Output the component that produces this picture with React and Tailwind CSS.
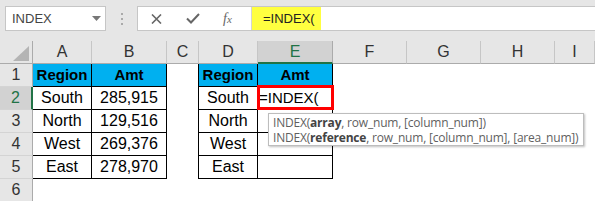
import React from 'react';

const cols = ['A', 'B', 'C', 'D', 'E', 'F', 'G', 'H', 'I'];

const data = [
  ['South', '285,915'],
  ['North', '129,516'],
  ['West', '269,376'],
  ['East', '278,970'],
];

function RowHead({ n, active }) {
  return (
    <div
      className={
        'flex items-center justify-center text-[16px] border-b border-b-[#d4d4d4] ' +
        (active
          ? 'bg-[#d2d2d2] text-[#217346] border-r-2 border-r-[#217346]'
          : 'bg-[#e6e6e6] text-[#333] border-r border-r-[#ababab]')
      }
    >
      {n}
    </div>
  );
}

export default function App() {
  return (
    <div className="relative w-[595px] h-[201px] overflow-hidden bg-white font-['Liberation_Sans',Arial,sans-serif] text-black">
      {/* formula bar */}
      <div className="h-[41px] bg-[#e6e6e6] flex items-start pt-[6px]">
        <div className="ml-[5px] w-[101px] h-[25px] bg-white border border-[#c6c6c6] flex items-center justify-between pl-[6px] pr-[4px]">
          <span className="text-[13px] text-[#444]">INDEX</span>
          <svg width="9" height="5" viewBox="0 0 9 5">
            <path d="M0 0 L9 0 L4.5 5 Z" fill="#777" />
          </svg>
        </div>
        <div className="w-[31px] h-[25px] flex flex-col items-center justify-center gap-[3px]">
          <span className="w-[2px] h-[2px] bg-[#aaa]" />
          <span className="w-[2px] h-[2px] bg-[#aaa]" />
          <span className="w-[2px] h-[2px] bg-[#aaa]" />
        </div>
        <div className="flex-1 h-[25px] bg-white border border-[#c6c6c6] border-r-0 flex">
          <div className="w-[113px] flex items-center">
            <svg className="ml-[13px]" width="11" height="10" viewBox="0 0 11 10">
              <path d="M1 0.5 L10 9.5 M10 0.5 L1 9.5" stroke="#666" strokeWidth="1.6" />
            </svg>
            <svg className="ml-[24px]" width="14" height="11" viewBox="0 0 14 11">
              <path d="M1 5.5 L5 9.5 L13 1" stroke="#666" strokeWidth="2" fill="none" />
            </svg>
            <span className="ml-[23px] text-[14px] text-[#666] italic font-['Liberation_Serif',serif]">
              f<span className="text-[11px]">x</span>
            </span>
          </div>
          <div className="w-px bg-[#d4d4d4]" />
          <div className="w-[69px] bg-[#ffff40] flex items-center pl-[11px] text-[13px] text-[#222]">
            =INDEX(
          </div>
        </div>
      </div>

      {/* sheet */}
      <div className="grid grid-cols-[33px_59px_75px_32px_59px_75px_74px_74px_74px_40px] grid-rows-[23px_23px_23px_23px_23px_23px_23px]">
        {/* header row */}
        <div className="relative bg-[#e6e6e6] border-r border-r-[#ababab] border-b border-b-[#ababab]">
          <svg className="absolute right-[3px] bottom-[2px]" width="16" height="15" viewBox="0 0 16 15">
            <path d="M16 0 L16 15 L0 15 Z" fill="#b4b4b4" />
          </svg>
        </div>
        {cols.map((c) =>
          c === 'E' ? (
            <div
              key={c}
              className="bg-[#d2d2d2] border-r border-r-[#ababab] border-b-2 border-b-[#217346] flex items-center justify-center text-[16px] text-[#217346]"
            >
              {c}
            </div>
          ) : (
            <div
              key={c}
              className="bg-[#e6e6e6] border-r border-r-[#c6c6c6] border-b border-b-[#ababab] flex items-center justify-center text-[16px] text-[#333]"
            >
              {c}
            </div>
          )
        )}

        {/* row 1 */}
        <RowHead n={1} />
        <div className="bg-[#00b0f0] border-r border-b border-black flex items-center justify-center text-[15px] font-bold">Region</div>
        <div className="bg-[#00b0f0] border-r border-b border-black flex items-center justify-center text-[15px] font-bold">Amt</div>
        <div className="border-r border-black" />
        <div className="bg-[#00b0f0] border-r border-b border-black flex items-center justify-center text-[15px] font-bold">Region</div>
        <div className="bg-[#00b0f0] border-r border-b border-black flex items-center justify-center text-[15px] font-bold">Amt</div>
        <div />
        <div />
        <div />
        <div />

        {data.map(([region, amt], i) => (
          <React.Fragment key={region}>
            <RowHead n={i + 2} active={i === 0} />
            <div className="border-r border-b border-black flex items-center justify-center text-[16px]">{region}</div>
            <div className="border-r border-b border-black flex items-center justify-center text-[16px]">{amt}</div>
            <div className="border-r border-black" />
            <div className="border-r border-b border-black flex items-center justify-center text-[16px]">{region}</div>
            <div className="relative border-r border-b border-black flex items-center text-[15px]">
              {i === 0 && (
                <>
                  <span className="pl-[1px]">=INDEX(</span>
                  <div className="absolute -left-[1px] -top-[2px] w-[77px] h-[25px] border-[3px] border-[#ff0000]" />
                </>
              )}
            </div>
            <div />
            <div />
            <div />
            <div />
          </React.Fragment>
        ))}

        {/* row 6 */}
        <RowHead n={6} />
        <div />
        <div />
        <div />
        <div />
        <div />
        <div />
        <div />
        <div />
        <div />
      </div>

      {/* function tooltip */}
      <div className="absolute left-[268px] top-[113px] w-[316px] h-[33px] bg-white border border-[#bdbdbd] shadow-[1px_1px_2px_rgba(0,0,0,0.25)] pl-[4px] pt-[1px] text-[12px] leading-[15px] text-[#5f5f5f] font-['Open_Sans','Liberation_Sans',sans-serif] tracking-[-0.2px]">
        <div>
          INDEX(<span className="font-bold text-[#444]">array</span>, row_num, [column_num])
        </div>
        <div>
          INDEX(<span className="font-bold text-[#444]">reference</span>, row_num, [column_num], [area_num])
        </div>
      </div>
    </div>
  );
}
